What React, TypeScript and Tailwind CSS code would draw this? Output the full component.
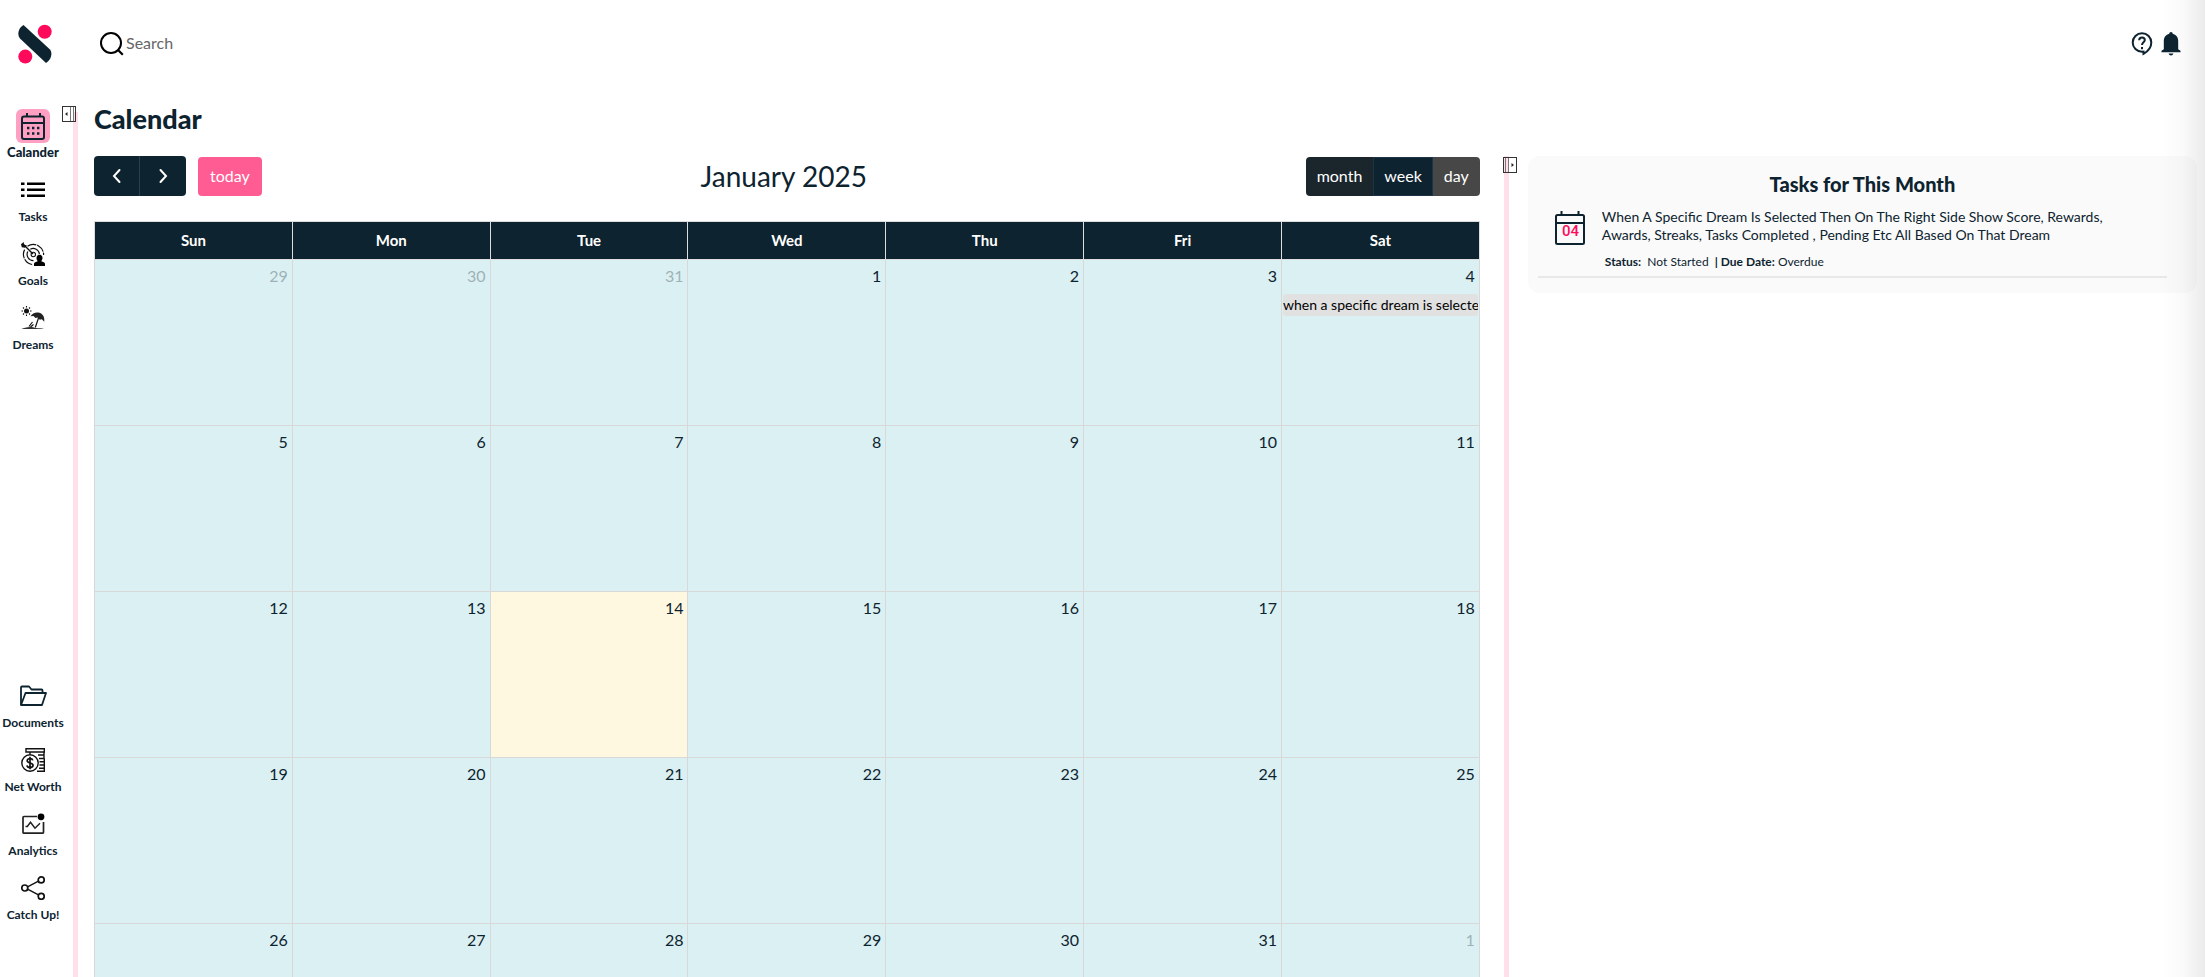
import type { ReactNode } from "react";

const INK = "#0d232f";

const CalendarIcon = () => (
  <svg viewBox="0 0 26 28" className="w-[26px] h-7" fill="none" stroke={INK} strokeWidth="2">
    <rect x="2" y="4.5" width="22" height="22.5" rx="2" />
    <path d="M2 11h22M7 1v4M20 1v4" />
    <path d="M7 16h2.4M12 16h2.4M17 16h2.4M7 21.500h2.4M12 21.500h2.4M17 21.500h2.4" strokeWidth="2.4" />
  </svg>
);

const TasksIcon = () => (
  <svg viewBox="0 0 24 24" className="size-6" fill="#000">
    <path d="M0 4.5h3.5V7H0zM6 4.5h18V7H6zM0 10.5h3.5V13H0zM6 10.5h18V13H6zM0 16.5h3.5V19H0zM6 16.5h18V19H6z" />
  </svg>
);

const GoalsIcon = () => (
  <svg viewBox="0 0 24 24" className="size-6" fill="none" stroke="#111">
    <path d="M6.5 4.2A10.3 10.3 0 0 1 22.6 13M3.6 7.6A10.3 10.3 0 0 0 12 22.6" strokeWidth="1.2" strokeDasharray="9 1" />
    <path d="M9.3 7.2A6.2 6.2 0 0 1 18.4 12M6.8 9.6A6.2 6.2 0 0 0 12.5 18.6" strokeWidth="1.2" />
    <circle cx="12.3" cy="12.5" r="2.2" strokeWidth="1.1" />
    <path d="M2 2l10 10" strokeWidth="1.4" />
    <path d="M0 2.2 2.6 0l.5 2.8 2.9.6-2 2.4-3.2-.5z" fill="#111" stroke="none" />
    <path d="M18.5 12.7c2 0 3.1 1.4 3 3.3-.1 1.5-.8 2.5-1.2 3.2 1.8.7 3.4 1 3.7 2.6V24H13v-2.2c.3-1.6 1.9-1.9 3.7-2.6-.5-.7-1.2-1.7-1.2-3.2 0-1.9 1-3.3 3-3.3z" fill="#000" stroke="none" />
  </svg>
);

const DreamsIcon = () => (
  <svg viewBox="0 0 24 24" className="size-6" fill="none" stroke="#111">
    <circle cx="5.5" cy="5" r="2.5" fill="#111" stroke="none" />
    <path d="M5.5 0v1.5M5.5 8.5V10M.5 5H2M9 5h1.5M2 1.5l1 1M8 7.5l1 1M9 1.5l-1 1M3 7.5l-1 1" strokeWidth="1.1" />
    <path d="M9.500 10.200C11.200 7.200 15 5.700 18.400 6.800c3.600 1.200 5.500 4.700 4.800 9l-2.300-2.600-2.100.6-2.200-2.300-2.100.5-2-2z" fill="#222" stroke="none" />
    <path d="M17.500 12 14.300 21.500" strokeWidth="1.2" />
    <path d="M8 20.500l3.500-4.500M9.500 21l3-2.500" strokeWidth="1.2" />
    <path d="M.5 23c2-1 5-2 8.500-2 3 0 4 .6 6 1s6 0 8 1z" fill="#333" stroke="none" />
  </svg>
);

const DocumentsIcon = () => (
  <svg viewBox="0 0 28 22" className="w-7 h-[22px]" fill="none" stroke={INK} strokeWidth="1.8" strokeLinejoin="round">
    <path d="M2 20V2.5Q2 1.5 3 1.5h7l2.500 3h10q1 0 1 1V7" />
    <path d="M2 20 6.500 8H27l-4 12z" />
  </svg>
);

const NetWorthIcon = () => (
  <svg viewBox="0 0 24 24" className="size-6" fill="none" stroke="#111" strokeWidth="1.4">
    <path d="M5 4V.8h18.300V4zM9 4v2M23 4v3h-6M18 10.500h5V7M18.500 13.800h4.800v-3.300M18.500 17h4.800v-3.200M18 20.200h5.300V17M16 23.300h7.300v-3.100" />
    <circle cx="9" cy="15" r="8.200" fill="#fff" />
    <path d="M11.800 12.400c-.3-1.300-1.400-1.800-2.800-1.800-1.600 0-2.800.8-2.800 2.100 0 3 5.800 1.500 5.800 4.500 0 1.500-1.300 2.300-3 2.300-1.600 0-2.800-.7-3-2.200M9 8.800v12.400" strokeWidth="1.700" />
  </svg>
);

const AnalyticsIcon = () => (
  <svg viewBox="0 0 24 24" className="size-6" fill="none" stroke="#222" strokeWidth="1.7">
    <path d="M16 4.500H3q-1 0-1 1v14.700q0 1 1 1h18.500q1 0 1-1V10" />
    <path d="M4.500 14.500h1.800l3.200-4.300 4.500 6 5-5" strokeWidth="1.500" />
    <circle cx="20" cy="4.800" r="3.400" fill="#000" stroke="none" />
  </svg>
);

const ShareIcon = () => (
  <svg viewBox="0 0 24 24" className="size-6" fill="none" stroke="#111" strokeWidth="1.7">
    <path d="M6.500 10.800 17.500 5.200M6.500 13.200l11 5.600" strokeWidth="1.400" />
    <circle cx="3.800" cy="12" r="3" />
    <circle cx="20.200" cy="3.900" r="3" />
    <circle cx="20.200" cy="20.300" r="3" />
  </svg>
);

const Logo = () => (
  <svg viewBox="0 0 34 40" className="w-[34px] h-10">
    <path d="M5.500 1 32 25.500c2.500 3.500 2 9.500-4 13.500L2 14.500C-1 11 0 4 5.500 1z" fill={INK} />
    <circle cx="26.700" cy="7.800" r="7" fill="#ff0a5b" />
    <circle cx="7.300" cy="32.600" r="7" fill="#ff0a5b" />
  </svg>
);

const SearchIcon = () => (
  <svg viewBox="0 0 24 24" className="size-6" fill="none" stroke="#000" strokeWidth="2">
    <circle cx="11" cy="11" r="10" />
    <path d="m17.500 17.500 5.300 5.300" strokeWidth="2.200" />
  </svg>
);

const HelpIcon = () => (
  <svg viewBox="0 0 22 24" className="w-[22px] h-6" fill="none" stroke={INK} strokeWidth="2">
    <path d="M11 19.800A9.300 9.300 0 1 1 20.300 10.500c0 4.500-3.200 8.800-7.800 11.300v-2.200z" />
    <path d="M8.200 8.300c0-1.700 1.200-2.700 2.800-2.700s2.800 1 2.800 2.500c0 2.200-2.800 2.300-2.800 5M11 15v2.200" />
  </svg>
);

const BellIcon = () => (
  <svg viewBox="0 0 20 24" className="w-5 h-6" fill={INK}>
    <path d="M10 0c1 0 1.700.7 1.700 1.800 3.400.8 5.500 3.600 5.500 7.200v8.300l2.300 1.500v1.500H.5v-1.500l2.300-1.500V9c0-3.600 2.100-6.400 5.500-7.200C8.300.7 9 0 10 0zM7.600 21.500h4.800c-.3 1.200-1.200 2-2.400 2s-2.100-.8-2.400-2z" />
  </svg>
);

const Chevron = ({ d }: { d: string }) => (
  <svg viewBox="0 0 16 16" className="size-4" fill="none" stroke="#fff" strokeWidth="2" strokeLinecap="round">
    <path d={d} />
  </svg>
);

const DoorIcon = ({ flip = false }: { flip?: boolean }) => (
  <svg viewBox="0 0 14 16" className={flip ? "w-3.5 h-4 -scale-x-100" : "w-3.5 h-4"} fill="none" stroke="#333">
    <rect x=".5" y=".5" width="13" height="15" />
    <path d="M8.500 1v14M11.500 1v14" stroke="#777" />
    <path d="M3 8l2.500-2v4z" fill="#222" stroke="none" />
  </svg>
);

type NavItem = { label: string; icon: ReactNode; active?: boolean };

const topNav: NavItem[] = [
  { label: "Calander", icon: <CalendarIcon />, active: true },
  { label: "Tasks", icon: <TasksIcon /> },
  { label: "Goals", icon: <GoalsIcon /> },
  { label: "Dreams", icon: <DreamsIcon /> },
];

const bottomNav: NavItem[] = [
  { label: "Documents", icon: <DocumentsIcon /> },
  { label: "Net Worth", icon: <NetWorthIcon /> },
  { label: "Analytics", icon: <AnalyticsIcon /> },
  { label: "Catch Up!", icon: <ShareIcon /> },
];

const weekDays = ["Sun", "Mon", "Tue", "Wed", "Thu", "Fri", "Sat"];

// January 2025 starts on a Wednesday
const weeks = Array.from({ length: 5 }, (_, w) =>
  weekDays.map((_, d) => {
    const date = new Date(2025, 0, w * 7 + d - 2);
    return { day: date.getDate(), current: date.getMonth() === 0 };
  })
);

const NavLink = ({ item }: { item: NavItem }) => (
  <a href="#" className="flex h-16 flex-col items-center">
    <span
      className={
        item.active
          ? "flex size-[34px] items-center justify-center rounded-md bg-[#ffa0c3]"
          : "flex size-[34px] items-center justify-center"
      }
    >
      {item.icon}
    </span>
    <span
      className={
        item.active
          ? "whitespace-nowrap text-[13px] leading-[18px] font-black"
          : "whitespace-nowrap text-xs leading-5 font-bold"
      }
    >
      {item.label}
    </span>
  </a>
);

export default function App() {
  return (
    <div className="relative flex h-screen flex-col overflow-hidden bg-white font-[Lato,sans-serif] text-[#0d232f]">
      <header className="flex h-22 shrink-0 items-center pl-[18px] pr-6">
        <Logo />
        <label className="ml-12 flex items-center gap-0.5">
          <SearchIcon />
          <input type="text" placeholder="Search" aria-label="Search" className="w-60 pb-[3px] text-base outline-none placeholder:text-[#666]" />
        </label>
        <div className="ml-auto flex items-center gap-2">
          <button type="button" aria-label="Help">
            <HelpIcon />
          </button>
          <button type="button" aria-label="Notifications">
            <BellIcon />
          </button>
        </div>
      </header>

      <div className="flex min-h-0 flex-1">
        {/* Sidebar */}
        <aside className="relative mt-[21px] flex w-[73px] shrink-0 flex-col">
          <nav className="flex w-[66px] flex-1 flex-col">
            {topNav.map((item) => (
              <NavLink key={item.label} item={item} />
            ))}
            <div className="mt-auto pb-[42px]">
              {bottomNav.map((item) => (
                <NavLink key={item.label} item={item} />
              ))}
            </div>
          </nav>
          <button type="button" aria-label="Collapse menu" className="absolute -top-[3px] left-[62px] z-10">
            <DoorIcon />
          </button>
        </aside>
        <div className="mt-6 w-[5px] shrink-0 bg-[#ffe0ea]" />

        {/* Calendar */}
        <main className="min-w-0 flex-1 pl-4 pr-6 pt-4">
          <h1 className="text-[27px] leading-[30px] font-black">Calendar</h1>

          <div className="mt-[22px] flex h-10 items-center justify-between">
            <div className="flex items-center gap-3">
              <div className="flex h-10 overflow-hidden rounded bg-[#0d232f]">
                <button type="button" aria-label="Previous month" className="flex w-[46px] items-center justify-center border-r border-[#2c3e50]">
                  <Chevron d="M10.500 2 5 8l5.500 6" />
                </button>
                <button type="button" aria-label="Next month" className="flex w-[46px] items-center justify-center">
                  <Chevron d="M5.500 2 11 8l-5.500 6" />
                </button>
              </div>
              <button type="button" className="h-[39px] rounded bg-[#ff5c93] px-3 text-base text-white">
                today
              </button>
            </div>
            <h2 className="text-[28px] leading-10">January 2025</h2>
            <div className="flex h-[39px] overflow-hidden rounded text-base text-white">
              <button type="button" className="bg-[#1a252c] px-[11px]">month</button>
              <button type="button" className="border border-[#1d3347] bg-[#0d232f] px-2.5">week</button>
              <button type="button" className="bg-[#474747] px-[11px]">day</button>
            </div>
          </div>

          <table className="mt-[25px] w-full table-fixed border-collapse">
            <thead>
              <tr>
                {weekDays.map((day) => (
                  <th key={day} className="h-[38px] border border-[#ddd] bg-[#0d232f] text-[15px] font-bold text-white">
                    {day}
                  </th>
                ))}
              </tr>
            </thead>
            <tbody>
              {weeks.map((week, w) => (
                <tr key={w} className="h-[166px]">
                  {week.map(({ day, current }) => (
                    <td
                      key={day}
                      className={
                        current && day === 14
                          ? "border border-[#d8d8d8] bg-[#fff8e0] p-0 align-top"
                          : "border border-[#d8d8d8] bg-[#dbf0f2] p-0 align-top"
                      }
                    >
                      <div className={current ? "px-1 pt-1 text-right text-base leading-6" : "px-1 pt-1 text-right text-base leading-6 opacity-30"}>
                        {day}
                      </div>
                      {current && day === 4 && (
                        <a href="#" className="mx-px mt-1.5 block overflow-hidden rounded-[3px] bg-[#e1e1e1] text-center text-sm leading-[22px] whitespace-nowrap text-black">
                          when a specific dream is selecte
                        </a>
                      )}
                    </td>
                  ))}
                </tr>
              ))}
            </tbody>
          </table>
        </main>

        {/* Tasks panel */}
        <aside className="mt-17 flex w-[31.8%] shrink-0 pr-2">
          <div className="relative w-[5px] shrink-0 bg-[#ffe0ea]">
            <button type="button" aria-label="Collapse tasks" className="absolute top-px -left-px">
              <DoorIcon flip />
            </button>
          </div>
          <section className="ml-[19px] h-fit flex-1 rounded-xl bg-[#fafafa] px-2.5 pt-3.5 pb-[15px]">
            <h2 className="text-center text-xl leading-7 font-black">Tasks for This Month</h2>
            <article className="mr-5 border-b-2 border-[#e8e8e8] pt-2.5 pb-[5px]">
              <div className="flex items-start">
                <svg viewBox="0 0 30 34" className="mt-[3px] ml-[17px] w-[30px] h-[34px] shrink-0" fill="none" stroke={INK} strokeWidth="2">
                  <rect x="1" y="4" width="28" height="29" rx="1.5" />
                  <path d="M1 12h28M6.500 0v4M23.500 0v4" />
                  <text x="15.500" y="25" textAnchor="middle" fontFamily="Roboto, sans-serif" fontSize="15" fontWeight="500" fill="#ff0a5b" stroke="none">
                    04
                  </text>
                </svg>
                <p className="ml-[17px] max-w-[530px] text-sm leading-[18px]">
                  When A Specific Dream Is Selected Then On The Right Side Show Score, Rewards, Awards, Streaks, Tasks Completed , Pending Etc All Based On That Dream
                </p>
              </div>
              <p className="mt-2 ml-[67px] text-xs leading-[18px]">
                <b>Status:</b>&nbsp; Not Started &nbsp;<b>| Due Date:</b> Overdue
              </p>
            </article>
          </section>
        </aside>
      </div>

      <div className="pointer-events-none absolute inset-y-0 right-0 w-11 bg-linear-to-l from-black/8 via-black/2 to-transparent" />
    </div>
  );
}
